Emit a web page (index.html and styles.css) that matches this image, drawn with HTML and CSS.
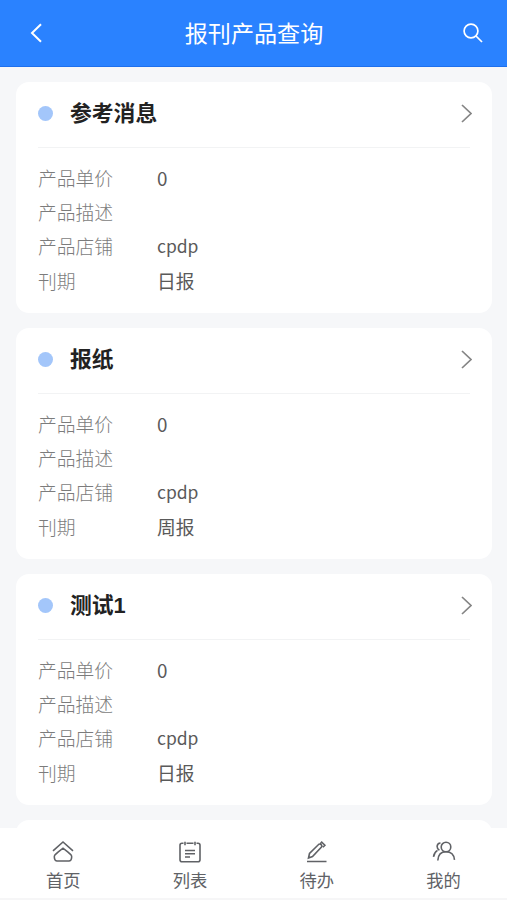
FILE: index.html
```html
<!DOCTYPE html>
<html lang="zh-CN">
<head>
<meta charset="utf-8">
<title>报刊产品查询</title>
<link rel="stylesheet" href="styles.css">
</head>
<body>
<div class="app">
  <header class="header">
    <svg class="back" viewBox="0 0 12 20"><path d="M11 1.2 2 10l9 8.8"/></svg>
    <h1>报刊产品查询</h1>
    <svg class="search" viewBox="0 0 20 20"><circle cx="8" cy="8" r="6.9"/><path d="m13 13 6 6"/></svg>
  </header>
  <main class="list">
    <section class="card">
      <div class="card-head"><i class="dot"></i><h2>参考消息</h2><svg class="arrow" viewBox="0 0 11 19"><path d="m1 1 9 8.5L1 18"/></svg></div>
      <dl>
        <dt>产品单价</dt><dd>0</dd>
        <dt>产品描述</dt><dd></dd>
        <dt>产品店铺</dt><dd class="code">cpdp</dd>
        <dt>刊期</dt><dd>日报</dd>
      </dl>
    </section>
    <section class="card">
      <div class="card-head"><i class="dot"></i><h2>报纸</h2><svg class="arrow" viewBox="0 0 11 19"><path d="m1 1 9 8.5L1 18"/></svg></div>
      <dl>
        <dt>产品单价</dt><dd>0</dd>
        <dt>产品描述</dt><dd></dd>
        <dt>产品店铺</dt><dd class="code">cpdp</dd>
        <dt>刊期</dt><dd>周报</dd>
      </dl>
    </section>
    <section class="card">
      <div class="card-head"><i class="dot"></i><h2>测试<span class="num">1</span></h2><svg class="arrow" viewBox="0 0 11 19"><path d="m1 1 9 8.5L1 18"/></svg></div>
      <dl>
        <dt>产品单价</dt><dd>0</dd>
        <dt>产品描述</dt><dd></dd>
        <dt>产品店铺</dt><dd class="code">cpdp</dd>
        <dt>刊期</dt><dd>日报</dd>
      </dl>
    </section>
    <section class="card"></section>
  </main>
  <nav class="tabs">
    <a class="tab"><svg viewBox="0 0 24 24"><path d="M2 10.800 12 2l10 8.800M7 12.200l5-4 5 4 3 2.600q1 1 .6 3.200-.4 3-2.600 3H6q-2.200 0-2.600-3-.4-2.200.6-3.200z"/></svg><span>首页</span></a>
    <a class="tab"><svg viewBox="0 0 24 24"><path d="M5.500 3.300H4q-2 0-2 2v14.400q0 2 2 2h16q2 0 2-2V5.300q0-2-2-2h-1.500M8.500 3.300h7M7 1.800v3.500M17 1.800v3.500M7 10.500h10M7 13.700h10M7 17h5"/></svg><span>列表</span></a>
    <a class="tab"><svg viewBox="0 0 24 24"><path d="M2 21.500h19.500M3.500 18l1-4.500L13.800 4.300q1.300-.8 2.400.3t.3 2.500L7.500 16.500zM14.800 4.200l1.900-2 3.200 3-2 2.100"/></svg><span>待办</span></a>
    <a class="tab"><svg viewBox="0 0 24 24"><circle cx="14" cy="7" r="4.800"/><path d="M5.800 20.500q.5-8.700 8.200-8.700t8.500 8M8.500 3q-3 .2-3.400 3.200 0 2.800 2.300 4M5.500 10.400Q2 12.500 1.500 16.800"/></svg><span>我的</span></a>
  </nav>
</div>
</body>
</html>
```
FILE: styles.css
```css
* { box-sizing: border-box; }
body {
  margin: 0;
  background: #f6f7f9;
  font-family: "Noto Sans CJK SC", sans-serif;
}
.app {
  display: flex;
  flex-direction: column;
  height: 900px;
  overflow: hidden;
}
svg { fill: none; stroke: currentColor; flex: none; }
h1, h2, dl, dd { margin: 0; }
.header {
  display: flex;
  align-items: center;
  justify-content: space-between;
  flex: none;
  height: 67px;
  padding: 0 24px 0 30px;
  background: #2a82ff;
  border-bottom: 1px solid #1e70ed;
  color: #fff;
}
.header h1 {
  font-size: 23.1px;
  line-height: 34px;
  font-weight: 400;
  margin-left: 3px;
  padding-bottom: 2px;
}
.back { width: 12px; height: 20px; stroke-width: 2; }
.search { width: 20px; height: 20px; stroke-width: 1.7; }
.list {
  flex: 1;
  min-height: 0;
  overflow: hidden;
  padding: 15px 15px 0 16px;
}
.card {
  height: 231px;
  margin-bottom: 15px;
  padding: 0 22px;
  background: #fff;
  border-radius: 13px;
}
.card-head {
  display: flex;
  align-items: center;
  height: 66px;
  padding-bottom: 3px;
  border-bottom: 1px solid #f2f3f4;
}
.dot {
  width: 15px;
  height: 15px;
  border-radius: 50%;
  background: #a3c6fa;
}
.card-head h2 {
  flex: 1;
  margin-left: 17px;
  padding-bottom: 2px;
  font-size: 21.8px;
  line-height: 32px;
  font-weight: 700;
  color: #222;
}
.num { font-family: "Liberation Sans", sans-serif; line-height: 0; }
.arrow { width: 11px; height: 19px; margin-right: -2px; stroke-width: 1.7; color: #858585; }
dl {
  display: grid;
  grid-template-columns: 119px 1fr;
  grid-auto-rows: 34.2px;
  padding-top: 13px;
  font-size: 18.8px;
  line-height: 34.2px;
}
dt { color: #7c7c7c; font-weight: 300; }
dd { color: #5a5a5a; }
.code { font-size: 17.5px; }
.tabs {
  display: flex;
  flex: none;
  height: 72px;
  background: #fff;
  border-bottom: 2px solid #f6f6f7;
}
.tab {
  flex: 1;
  display: flex;
  flex-direction: column;
  align-items: center;
  padding-top: 12px;
  color: #606266;
  font-size: 17.3px;
  line-height: 26px;
}
.tab svg { width: 24px; height: 24px; stroke-width: 1.6; margin-bottom: 3px; }
```
